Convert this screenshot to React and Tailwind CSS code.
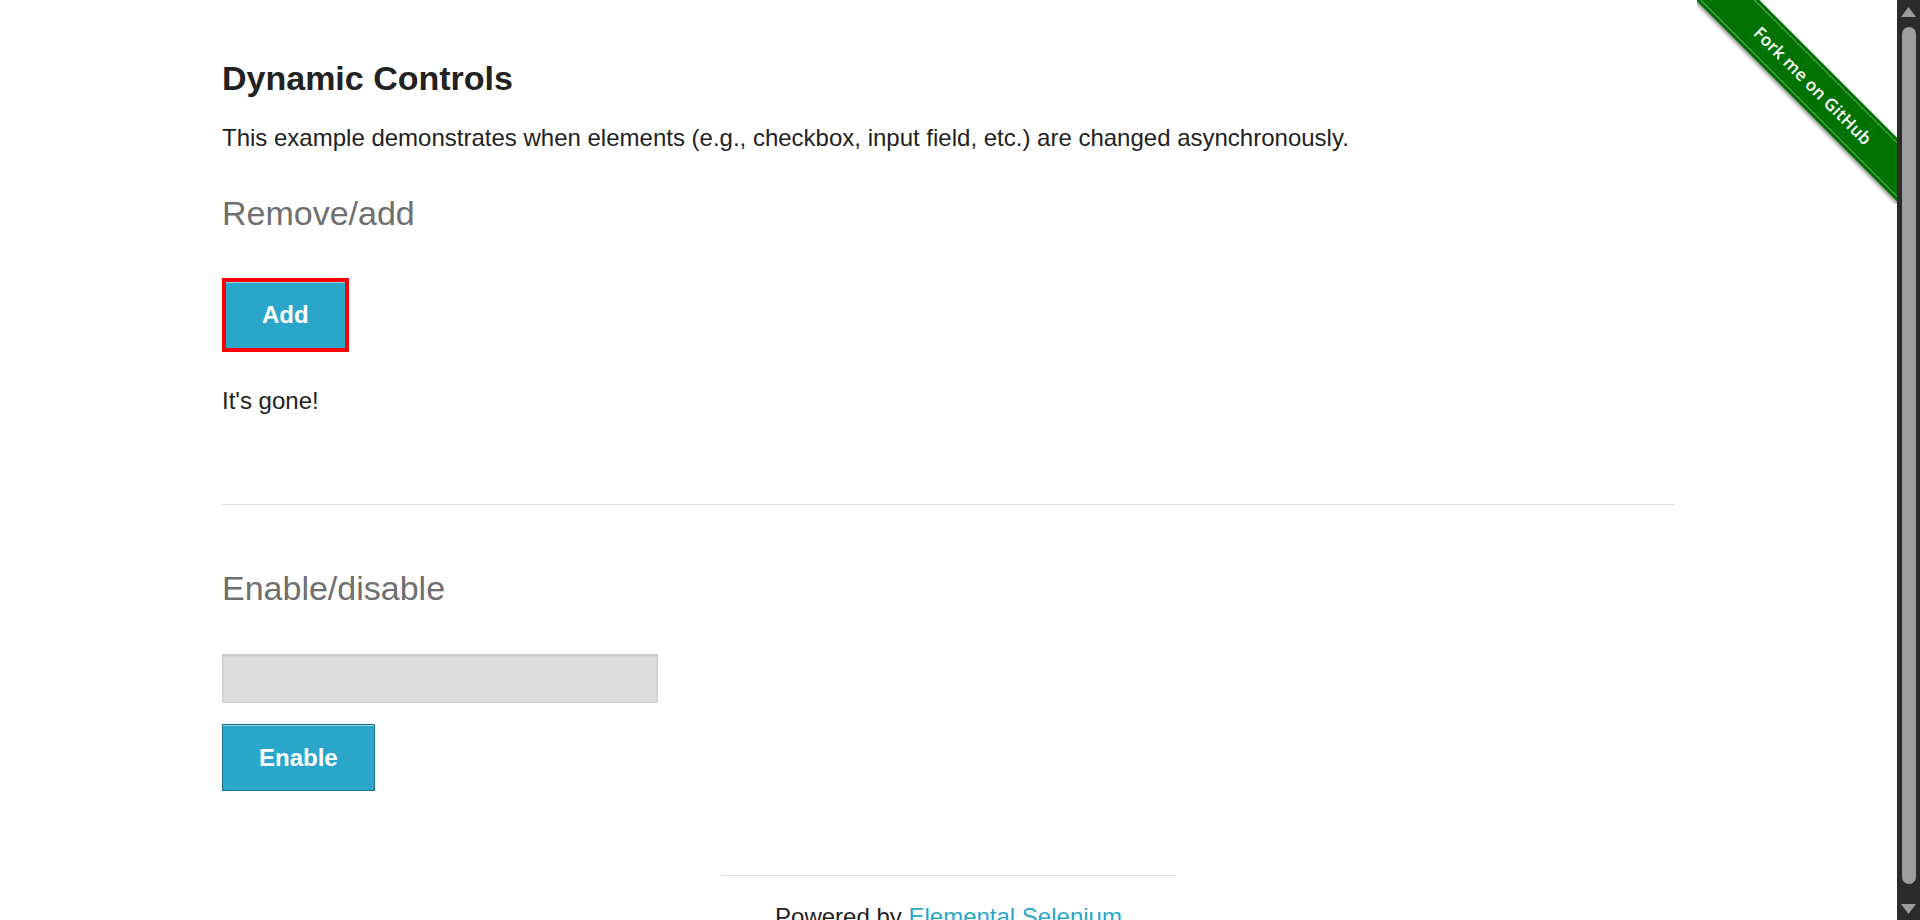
const ForkRibbon = () => {
  return (
    <div className="absolute top-0 right-0 w-[200px] h-[204px] overflow-hidden pointer-events-none">
      <div className="absolute left-[-34px] top-[63px] w-[300px] h-[45px] rotate-45 bg-[#007200] shadow-[0_2px_4px_rgba(0,0,0,0.45)] flex items-center justify-center">
        <div className="absolute inset-x-0 top-[3px] h-px bg-white/40" />
        <div className="absolute inset-x-0 bottom-[3px] h-px bg-white/40" />
        <span className="text-white text-[17px] font-semibold tracking-[0.2px] font-['Open_Sans',sans-serif]">
          Fork me on GitHub
        </span>
      </div>
    </div>
  );
};

const Scrollbar = () => {
  return (
    <div className="w-[23px] h-[920px] bg-[#2b2b2b] flex flex-col items-center shrink-0">
      <svg width="15" height="10" viewBox="0 0 15 10" className="mt-[7px]">
        <polygon points="7.5,0 15,10 0,10" fill="#9c9c9c" />
      </svg>
      <div className="mt-[10px] w-[14px] flex-1 rounded-[7px] bg-[#9e9e9e]" />
      <svg width="15" height="10" viewBox="0 0 15 10" className="mt-[20px] mb-[6px]">
        <polygon points="0,0 15,0 7.5,10" fill="#9c9c9c" />
      </svg>
    </div>
  );
};

const Button = ({ children, focused }) => {
  return (
    <button
      className={
        focused
          ? "h-[74px] px-[36px] bg-[#2ba6cb] border-4 border-[#ff0000] shadow-[inset_0_1px_0_rgba(255,255,255,0.5)] text-white text-[24px] font-bold leading-none"
          : "h-[67px] px-[36px] bg-[#2ba6cb] border border-[#1e728c] shadow-[inset_0_1px_0_rgba(255,255,255,0.5)] text-white text-[24px] font-bold leading-none"
      }
    >
      {children}
    </button>
  );
};

export default function App() {
  return (
    <div className="flex w-full h-[920px] overflow-hidden bg-white font-['Liberation_Sans',Arial,sans-serif] text-[#222222]">
      <main className="relative flex-1 h-[920px] overflow-hidden">
        <ForkRibbon />
        <div className="w-[1453px] mx-auto pt-[58px]">
          <h3 className="text-[34px] leading-[40px] font-bold">Dynamic Controls</h3>
          <p className="mt-[26px] text-[24px] leading-[28px]">
            This example demonstrates when elements (e.g., checkbox, input field, etc.) are changed asynchronously.
          </p>

          <h4 className="mt-[41px] text-[34px] leading-[40px] text-[#6f6f6f]">Remove/add</h4>
          <div className="mt-[45px]">
            <Button focused>Add</Button>
          </div>
          <p className="mt-[35px] text-[24px] leading-[28px]">It's gone!</p>

          <hr className="mt-[89px] border-0 border-t border-[#dddddd]" />

          <h4 className="mt-[63px] text-[34px] leading-[40px] text-[#6f6f6f]">Enable/disable</h4>
          <div className="mt-[46px]">
            <input
              type="text"
              disabled
              className="block w-[436px] h-[49px] bg-[#dddddd] border border-[#cccccc] shadow-[inset_0_1px_2px_rgba(0,0,0,0.1)]"
            />
          </div>
          <div className="mt-[21px]">
            <Button>Enable</Button>
          </div>

          <div className="mt-[84px] flex flex-col items-center">
            <hr className="w-[455px] border-0 border-t border-[#dddddd]" />
            <p className="mt-[27px] text-[24px] leading-[28px]">
              Powered by <a href="#" className="text-[#2ba6cb]">Elemental Selenium</a>
            </p>
          </div>
        </div>
      </main>
      <Scrollbar />
    </div>
  );
}
